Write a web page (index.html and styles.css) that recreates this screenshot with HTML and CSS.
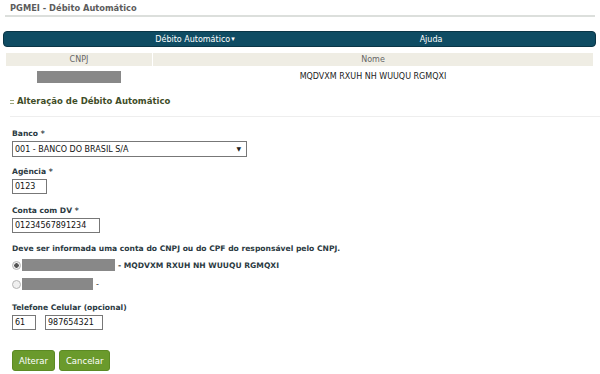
FILE: index.html
```html
<!DOCTYPE html>
<html>
<head>
    <title>PGMEI - Débito Automático</title>
    <link rel="stylesheet" href="styles.css">
</head>
<body>
    <div class="page-title">PGMEI - Débito Automático</div>

    <div class="menu">
        <div class="menu-item first">Débito Automático<span class="caret">&#9662;</span></div>
        <div class="menu-item second">Ajuda</div>
    </div>

    <table class="info">
        <tr>
            <th class="col-cnpj">CNPJ</th>
            <th>Nome</th>
        </tr>
        <tr>
            <td class="col-cnpj"><span class="hidden-box cnpj-box"></span></td>
            <td>MQDVXM RXUH NH WUUQU RGMQXI</td>
        </tr>
    </table>

    <div class="section">
        <div class="section-title"><span class="toggle"></span>Alteração de Débito Automático</div>

        <form class="form" id="debitoForm">
            <label class="lbl">Banco *</label>
            <div class="select-wrap">
                <select class="fld fld-banco">
                    <option>001 - BANCO DO BRASIL S/A</option>
                </select>
                <span class="select-arrow">&#9660;</span>
            </div>

            <label class="lbl">Agência *</label>
            <input class="fld fld-agencia" type="text" value="0123">

            <label class="lbl">Conta com DV *</label>
            <input class="fld fld-conta" type="text" value="01234567891234">

            <p class="msg">Deve ser informada uma conta do CNPJ ou do CPF do responsável pelo CNPJ.</p>

            <div class="opt">
                <input type="radio" name="titular" checked>
                <span class="hidden-box opt-box1"></span>
                <span class="opt-name">- MQDVXM RXUH NH WUUQU RGMQXI</span>
            </div>
            <div class="opt">
                <input type="radio" name="titular">
                <span class="hidden-box opt-box2"></span>
                <span class="opt-dash">-</span>
            </div>

            <label class="lbl lbl-tel">Telefone Celular (opcional)</label>
            <div class="phone">
                <input class="fld fld-ddd" type="text" value="61">
                <input class="fld fld-num" type="text" value="987654321">
            </div>

            <div class="actions">
                <button type="submit" class="btn">Alterar</button>
                <button type="button" class="btn">Cancelar</button>
            </div>
        </form>
    </div>
</body>
</html>
```

FILE: styles.css
```css
body {
    font-family: "DejaVu Sans", Verdana, sans-serif;
    font-size: 8px;
    color: #333;
    margin: 0;
    background: #fff;
}
.page-title {
    margin: 0 5px;
    padding: 3px 5px 2px;
    font-size: 8.3px;
    font-weight: bold;
    color: #5c5c5c;
    border-bottom: 2px solid #dcdfdc;
}
.menu {
    display: flex;
    margin: 14px 4px 0 3px;
    height: 16px;
    background: #0f4c63;
    border: 1px solid #0a3546;
    border-radius: 4px;
    box-sizing: border-box;
    color: #fff;
}
.menu-item {
    display: flex;
    align-items: center;
    justify-content: center;
}
.menu-item.first {
    width: 382px;
}
.menu-item.second {
    width: 90px;
}
.caret {
    font-size: 7px;
    margin-left: 1px;
}
.info {
    margin: 6px 0 0 5px;
    width: 589px;
    border-collapse: separate;
    border-spacing: 1px 0;
}
.info th {
    background: #efede4;
    color: #666;
    font-weight: normal;
    height: 13px;
    padding: 0;
}
.info td {
    text-align: center;
    color: #222;
    height: 15px;
    padding: 0;
    padding-top: 3px;
}
.info .col-cnpj {
    width: 146px;
}
.hidden-box {
    display: inline-block;
    background: #888;
    height: 12px;
    vertical-align: middle;
}
.cnpj-box {
    width: 84px;
}
.section {
    margin: 12px 0 0 10px;
}
.section-title {
    font-size: 8.5px;
    font-weight: bold;
    color: #3f4d28;
    padding-bottom: 10px;
    border-bottom: 1px solid #eeeeee;
}
.toggle {
    display: inline-block;
    width: 4px;
    height: 2px;
    border-top: 1px solid #9aa67c;
    border-bottom: 1px solid #9aa67c;
    margin: 0 3px 0 0;
    vertical-align: 0;
}
.form {
    padding: 12px 0 0 2px;
}
.lbl {
    display: block;
    font-weight: bold;
    font-size: 7.6px;
    color: #2b3a42;
    margin-bottom: 2px;
    height: 10px;
}
.fld {
    display: block;
    font-family: "DejaVu Sans", Verdana, sans-serif;
    font-size: 8px;
    color: #111;
    border: 1px solid #777;
    border-radius: 0;
    padding: 0 2px;
    margin: 0 0 12px;
    height: 15px;
    box-sizing: border-box;
    background: #fff;
}
.select-wrap {
    position: relative;
    width: 235px;
}
.fld-banco {
    width: 235px;
    height: 16px;
    margin-bottom: 10px;
    appearance: none;
    -webkit-appearance: none;
}
.select-arrow {
    position: absolute;
    right: 6px;
    top: 4px;
    font-size: 6px;
    color: #222;
    pointer-events: none;
}
.fld-agencia {
    width: 35px;
}
.fld-conta {
    width: 88px;
    margin-bottom: 11px;
}
.msg {
    margin: 0 0 5px;
    font-weight: bold;
    font-size: 7.6px;
    color: #2b3a42;
}
.opt {
    display: flex;
    align-items: center;
    height: 14px;
    margin-bottom: 5px;
}
.opt input {
    appearance: none;
    -webkit-appearance: none;
    width: 9px;
    height: 9px;
    margin: 0 1px 0 0;
    border: 1px solid #b5b5b5;
    border-radius: 50%;
    background: #f0f0f0;
    box-sizing: border-box;
}
.opt input:checked {
    background: radial-gradient(circle, #555 0 2px, #f0f0f0 2.5px);
}
.opt-box1 {
    width: 93px;
}
.opt-box2 {
    width: 71px;
}
.opt-name {
    margin-left: 3px;
    font-weight: bold;
    font-size: 7.6px;
    color: #2b3a42;
}
.opt-dash {
    margin-left: 3px;
}
.lbl-tel {
    margin-top: 12px;
}
.phone {
    display: flex;
    gap: 9px;
}
.fld-ddd {
    width: 24px;
}
.fld-num {
    width: 58px;
}
.actions {
    display: flex;
    gap: 4px;
    margin-top: 8px;
}
.btn {
    font-family: "DejaVu Sans", Verdana, sans-serif;
    font-size: 8.5px;
    color: #fff;
    background: #6a9a2c;
    border: 1px solid #5c8a24;
    border-radius: 3px;
    height: 21px;
    padding: 0 6px;
}
```
